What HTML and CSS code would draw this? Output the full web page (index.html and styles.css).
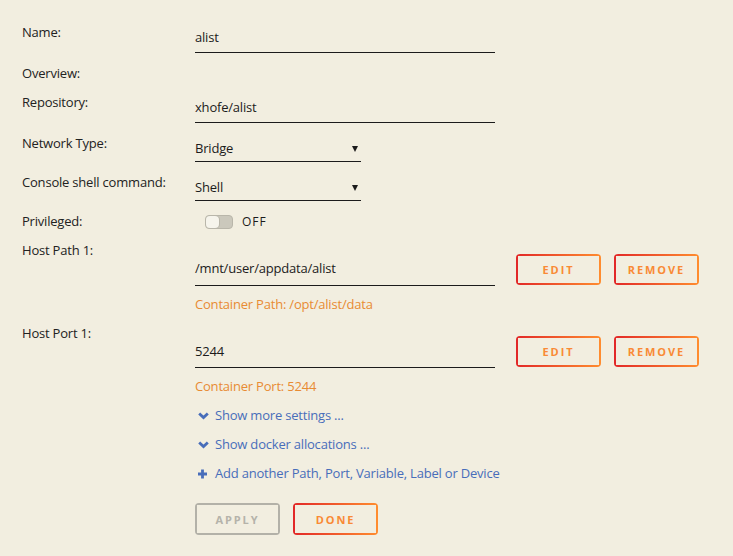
FILE: index.html
```html
<!DOCTYPE html>
<html>
<head>
<meta charset="utf-8">
<link rel="stylesheet" href="styles.css">
</head>
<body>
<div class="form">
  <div class="row">
    <div class="label">Name:</div>
    <div class="field">alist</div>
  </div>
  <div class="row">
    <div class="label">Overview:</div>
  </div>
  <div class="row">
    <div class="label">Repository:</div>
    <div class="field">xhofe/alist</div>
  </div>
  <div class="row">
    <div class="label">Network Type:</div>
    <div class="select"><span>Bridge</span><i class="arrow"></i></div>
  </div>
  <div class="row">
    <div class="label">Console shell command:</div>
    <div class="select"><span>Shell</span><i class="arrow"></i></div>
  </div>
  <div class="row">
    <div class="label">Privileged:</div>
    <div class="switch"><span class="track"><span class="knob"></span></span><span class="state">OFF</span></div>
  </div>
  <div class="row">
    <div class="label">Host Path 1:</div>
    <div class="mapped">
      <div class="pair">
        <div class="field tall">/mnt/user/appdata/alist</div>
        <button class="btn first">Edit</button>
        <button class="btn">Remove</button>
      </div>
      <div class="note">Container Path: /opt/alist/data</div>
    </div>
  </div>
  <div class="row">
    <div class="label">Host Port 1:</div>
    <div class="mapped port">
      <div class="pair">
        <div class="field tall">5244</div>
        <button class="btn first">Edit</button>
        <button class="btn">Remove</button>
      </div>
      <div class="note">Container Port: 5244</div>
    </div>
  </div>
  <div class="links">
    <a class="link"><svg class="ico" viewBox="0 0 11 8" width="11" height="8"><path d="M1.2 1.5 L5.5 5.6 L9.8 1.5" fill="none" stroke="#486dba" stroke-width="2.8"/></svg><span>Show more settings ...</span></a>
    <a class="link"><svg class="ico" viewBox="0 0 11 8" width="11" height="8"><path d="M1.2 1.5 L5.5 5.6 L9.8 1.5" fill="none" stroke="#486dba" stroke-width="2.8"/></svg><span>Show docker allocations ...</span></a>
    <a class="link"><svg class="ico" viewBox="0 0 11 10" width="11" height="10"><path d="M4.5 0.5 V9.5 M0 5 H9" fill="none" stroke="#486dba" stroke-width="2.8"/></svg><span>Add another Path, Port, Variable, Label or Device</span></a>
  </div>
  <div class="actions">
    <button class="btn disabled">Apply</button>
    <button class="btn">Done</button>
  </div>
</div>
</body>
</html>
```
FILE: styles.css
```css
html, body {
  margin: 0;
  background: #f2eee0;
}
body {
  font-family: "Open Sans", "Noto Sans", sans-serif;
  font-size: 13px;
  line-height: 17px;
  letter-spacing: -0.2px;
  color: #1c1b1b;
}
.form {
  padding: 24px 0 0 22px;
}
.row {
  display: grid;
  grid-template-columns: 173px auto;
  align-items: start;
  margin-bottom: 12px;
}
.label {
  color: #222;
}
.field {
  width: 300px;
  padding: 5px 0 6px;
  border-bottom: 1px solid #1c1b1b;
}
.field.tall {
  padding-top: 6px;
  padding-bottom: 8px;
}
.select {
  width: 166px;
  padding: 5px 0 4px;
  border-bottom: 1px solid #1c1b1b;
  display: flex;
  justify-content: space-between;
  align-items: center;
}
.arrow {
  width: 0;
  height: 0;
  border-left: 3px solid transparent;
  border-right: 3px solid transparent;
  border-top: 6px solid #1c1b1b;
  margin-right: 3px;
}
.switch {
  display: flex;
  align-items: center;
  height: 17px;
  padding-left: 10px;
}
.track {
  width: 26px;
  height: 12px;
  border-radius: 4px;
  border: 1px solid #b9b6aa;
  background: #cbc8bc;
  display: flex;
}
.knob {
  width: 13px;
  height: 12px;
  border-radius: 4px;
  background: #f6f4ec;
  box-shadow: 1px 0 0 #b9b6aa;
}
.state {
  margin-left: 9px;
  font-size: 12px;
  letter-spacing: 1px;
}
.mapped {
  margin-top: 12px;
}
.mapped.port {
  margin-top: 11px;
}
.mapped.port .field.tall {
  padding-top: 7px;
  padding-bottom: 7px;
}
.pair {
  display: flex;
  align-items: flex-start;
}
.note {
  margin-top: 10px;
  color: #e88b33;
}
.btn {
  font-family: "Open Sans", "Noto Sans", sans-serif;
  font-size: 11px;
  font-weight: bold;
  letter-spacing: 1.9px;
  text-transform: uppercase;
  color: #f98a35;
  width: 85px;
  height: 31px;
  padding: 0;
  border: 0;
  border-radius: 4px;
  margin-left: 13px;
  background:
    linear-gradient(90deg, #e22828 0, #ff8c2f) 0 0 / 100% 2px no-repeat,
    linear-gradient(90deg, #e22828 0, #ff8c2f) 0 100% / 100% 2px no-repeat,
    linear-gradient(0deg, #e22828 0, #e22828) 0 100% / 2px 100% no-repeat,
    linear-gradient(0deg, #ff8c2f 0, #ff8c2f) 100% 100% / 2px 100% no-repeat;
}
.btn.first {
  margin-left: 21px;
}
.links {
  margin-left: 173px;
}
.link {
  display: flex;
  align-items: center;
  color: #486dba;
  margin-bottom: 12px;
}
.ico {
  margin-left: 3px;
  margin-right: 6px;
  flex: none;
}
.actions {
  margin-left: 173px;
  margin-top: 21px;
  display: flex;
}
.actions .btn {
  margin-left: 0;
  margin-right: 13px;
  height: 32px;
}
.btn.disabled {
  color: #b5b3aa;
  background:
    linear-gradient(#b3b1a8, #b3b1a8) 0 0 / 100% 2px no-repeat,
    linear-gradient(#b3b1a8, #b3b1a8) 0 100% / 100% 2px no-repeat,
    linear-gradient(#b3b1a8, #b3b1a8) 0 0 / 2px 100% no-repeat,
    linear-gradient(#b3b1a8, #b3b1a8) 100% 0 / 2px 100% no-repeat;
}
```
